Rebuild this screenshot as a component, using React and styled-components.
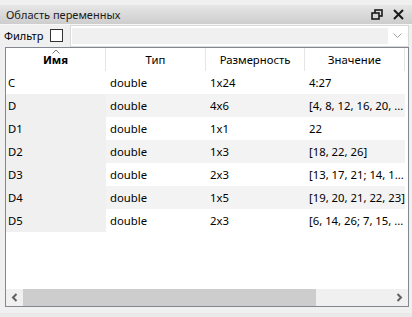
import React from "react";
import styled, { createGlobalStyle } from "styled-components";

const Global = createGlobalStyle`
  html, body { margin: 0; padding: 0; background: #f0f0f0; }
  body { font-family: "Segoe UI", "Noto Sans", "Open Sans", sans-serif; font-size: 11.3px; color: #000; }
`;

const Window = styled.div`
  width: 412px;
  height: 317px;
  display: flex;
  flex-direction: column;
  background: #f0f0f0;
  overflow: hidden;
`;

const TitleBar = styled.div`
  margin-top: 5px;
  height: 19px;
  display: flex;
  align-items: center;
  padding: 0 6px;
  background: linear-gradient(#e6e6e6, #cdcdcd);
  border-bottom: 1px solid #f7f7f7;
`;

const Title = styled.span`
  flex: 1;
  font-size: 11px;
  line-height: 19px;
  color: #1a1a1a;
`;

const TitleIcons = styled.div`
  display: flex;
  align-items: center;
  gap: 10px;
  margin-right: 2px;
`;

const FilterRow = styled.div`
  height: 21px;
  display: flex;
  align-items: center;
  padding: 0 3px 0 4px;
`;

const FilterLabel = styled.span`
  font-size: 11px;
  margin-right: 7px;
`;

const Check = styled.span`
  width: 11px;
  height: 11px;
  border: 1px solid #333;
  background: #fff;
  margin-right: 7px;
`;

const Combo = styled.div`
  flex: 1;
  height: 18px;
  border: 1px solid #d9d9d9;
  background: #fff;
  display: flex;
  align-items: center;
  padding: 1px;
  box-sizing: content-box;
`;

const ComboField = styled.div`
  flex: 1;
  height: 16px;
  background: #f0f0f0;
`;

const ComboArrow = styled.div`
  width: 19px;
  display: flex;
  justify-content: center;
  align-items: center;
`;

const Frame = styled.div`
  margin: 1px 3px 0 5px;
  height: 258px;
  border: 1px solid #828790;
  background: #fff;
  display: flex;
  flex-direction: column;
`;

const Grid = styled.div`
  flex: 1;
  display: flex;
  flex-direction: column;
  overflow: hidden;
`;

const Row = styled.div`
  display: grid;
  grid-template-columns: 100px 100px 99px 100px;
  height: 23px;
`;

const HeadCell = styled.div`
  position: relative;
  display: flex;
  align-items: center;
  justify-content: center;
  border-right: 1px solid #e5e5e5;
  font-weight: ${(p) => (p.$bold ? 700 : 400)};
  background: #fff;
`;

const SortArrow = styled.svg`
  position: absolute;
  top: 1px;
  left: 50%;
  margin-left: -4px;
`;

const Cell = styled.div`
  display: flex;
  align-items: center;
  padding-left: ${(p) => (p.$first ? 2 : 4)}px;
  white-space: nowrap;
  overflow: hidden;
  background: ${(p) => p.$bg};
`;

const Scrollbar = styled.div`
  height: 17px;
  display: flex;
  background: #f0f0f0;
`;

const ScrollBtn = styled.div`
  width: 17px;
  display: flex;
  align-items: center;
  justify-content: center;
`;

const Track = styled.div`
  flex: 1;
  display: flex;
`;

const Thumb = styled.div`
  width: 293px;
  background: #cdcdcd;
`;

const Status = styled.div`
  flex: 1;
  margin-top: 6px;
  background: #e9e9e9;
`;

const rows = [
  ["C", "double", "1x24", "4:27"],
  ["D", "double", "4x6", "[4, 8, 12, 16, 20, ..."],
  ["D1", "double", "1x1", "22"],
  ["D2", "double", "1x3", "[18, 22, 26]"],
  ["D3", "double", "2x3", "[13, 17, 21; 14, 1..."],
  ["D4", "double", "1x5", "[19, 20, 21, 22, 23]"],
  ["D5", "double", "2x3", "[6, 14, 26; 7, 15, ..."],
];

export default function App() {
  return (
    <>
      <Global />
      <Window>
        <TitleBar>
          <Title>Область переменных</Title>
          <TitleIcons>
            <svg width="12" height="11" viewBox="0 0 12 11">
              <rect x="4" y="1" width="7" height="6" fill="none" stroke="#1a1a1a" strokeWidth="1.6" />
              <rect x="1" y="4" width="7" height="6" fill="#d6d6d6" stroke="#1a1a1a" strokeWidth="1.6" />
            </svg>
            <svg width="11" height="11" viewBox="0 0 11 11">
              <path d="M1 1L10 10M10 1L1 10" stroke="#1a1a1a" strokeWidth="2" />
            </svg>
          </TitleIcons>
        </TitleBar>
        <FilterRow>
          <FilterLabel>Фильтр</FilterLabel>
          <Check />
          <Combo>
            <ComboField />
            <ComboArrow>
              <svg width="9" height="6" viewBox="0 0 9 6">
                <path d="M0.5 0.5L4.5 4.5L8.5 0.5" fill="none" stroke="#a0a0a0" strokeWidth="1" />
              </svg>
            </ComboArrow>
          </Combo>
        </FilterRow>
        <Frame>
          <Grid>
            <Row>
              <HeadCell $bold>
                <SortArrow width="8" height="5" viewBox="0 0 8 5">
                  <path d="M0.5 4.5L4 1L7.5 4.5" fill="none" stroke="#777" strokeWidth="1" />
                </SortArrow>
                Имя
              </HeadCell>
              <HeadCell>Тип</HeadCell>
              <HeadCell>Размерность</HeadCell>
              <HeadCell>Значение</HeadCell>
            </Row>
            {rows.map((r, i) => {
              const alt = i % 2 === 1 ? "#f3f3f3" : "#fff";
              return (
                <Row key={r[0]}>
                  <Cell $first $bg={i === 0 ? "#fff" : "#f0f0f0"}>{r[0]}</Cell>
                  <Cell $bg={alt}>{r[1]}</Cell>
                  <Cell $bg={alt}>{r[2]}</Cell>
                  <Cell $bg={alt}>{r[3]}</Cell>
                </Row>
              );
            })}
          </Grid>
          <Scrollbar>
            <ScrollBtn>
              <svg width="7" height="9" viewBox="0 0 7 9">
                <path d="M5.5 1L2 4.5L5.5 8" fill="none" stroke="#606060" strokeWidth="2" />
              </svg>
            </ScrollBtn>
            <Track>
              <Thumb />
            </Track>
            <ScrollBtn>
              <svg width="7" height="9" viewBox="0 0 7 9">
                <path d="M1.5 1L5 4.5L1.5 8" fill="none" stroke="#606060" strokeWidth="2" />
              </svg>
            </ScrollBtn>
          </Scrollbar>
        </Frame>
        <Status />
      </Window>
    </>
  );
}
